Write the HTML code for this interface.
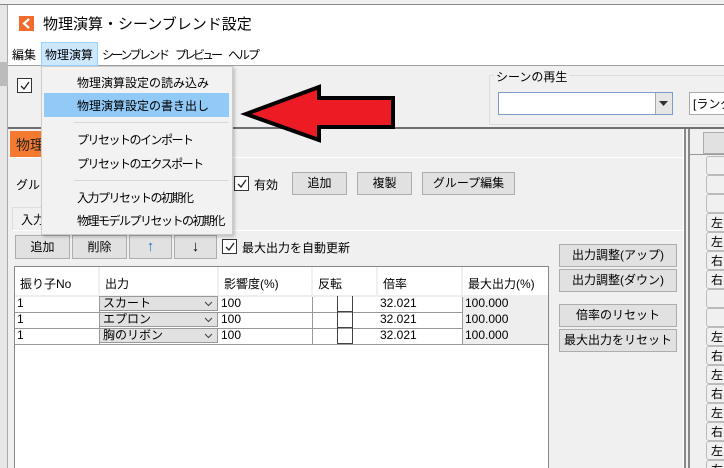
<!DOCTYPE html>
<html><head><meta charset="utf-8"><style>
*{box-sizing:border-box;margin:0;padding:0}
html,body{width:724px;height:468px;overflow:hidden}
body{background:#f0f0f0;font-family:"Liberation Sans","Noto Sans CJK JP",sans-serif;font-size:12px;color:#000;position:relative}
.a{position:absolute;white-space:nowrap}
.btn{position:absolute;background:#e1e1e1;border:1px solid #adadad;text-align:center;font-size:12px}
.cb{position:absolute;width:15px;height:15px;background:#fff;border:1px solid #333}
.cb svg{position:absolute;left:1px;top:1px}
.cell{position:absolute;height:16px;line-height:15px;font-size:12px;padding-left:2px}
.k{letter-spacing:-1.5px}
</style></head><body>
<div class="a" style="left:0;top:0;width:724px;height:5px;background:#f0f0f0;border-bottom:1px solid #888"></div>
<div class="a" style="left:0;top:5px;width:8px;height:463px;background:#e6e6e6;border-right:1px solid #aaa"></div>
<div class="a" style="left:0;top:62px;width:8px;height:24px;background:#bbb"></div>
<!-- title bar -->
<div class="a" style="left:8px;top:5px;width:716px;height:61px;background:#fff;border-bottom:1px solid #a0a0a0"></div>
<div class="a" style="left:19px;top:16px;width:15px;height:15px;background:#f26b2c"></div>
<svg class="a" style="left:19px;top:16px" width="15" height="15"><path d="M10 3 L5 7.5 L10 12" stroke="#fff" stroke-width="2.2" fill="none"/></svg>
<div class="a" style="left:43px;top:13px;font-size:15px">物理演算・シーンブレンド設定</div>
<!-- menu -->
<div class="a" style="left:41px;top:42px;width:57px;height:24px;background:#cce8ff;border:1px solid #99d1ff"></div>
<div class="a" style="left:12px;top:46px;font-size:12px">編集</div>
<div class="a" style="left:45px;top:46px;font-size:12px">物理演算</div>
<div class="a k" style="left:102px;top:46px;font-size:12px;letter-spacing:-2.5px">シーンブレンド</div>
<div class="a k" style="left:175px;top:46px;font-size:12px;letter-spacing:-3px">プレビュー</div>
<div class="a k" style="left:228px;top:46px;font-size:12px;letter-spacing:-2px">ヘルプ</div>
<!-- checkbox top -->
<div class="cb" style="left:17px;top:78px"><svg width="12" height="12"><path d="M2 6 L5 9 L10 2" stroke="#222" stroke-width="1.3" fill="none"/></svg></div>
<!-- scene group -->
<div class="a" style="left:489px;top:75px;width:240px;height:50px;border:1px solid #dcdcdc"></div>
<div class="a" style="left:494px;top:68px;background:#f0f0f0;padding:0 2px;font-size:12px">シーンの再生</div>
<div class="a" style="left:498px;top:92px;width:175px;height:23px;background:#fff;border:1px solid #7a9cc6"></div>
<div class="a" style="left:655px;top:93px;width:17px;height:21px;background:#e6e6e6;border-left:1px solid #aaa"></div>
<svg class="a" style="left:659px;top:101px" width="10" height="6"><path d="M0 0 H9 L4.5 5Z" fill="#333"/></svg>
<div class="a" style="left:689px;top:92px;width:40px;height:23px;background:#fff;border:1px solid #aaa;padding:2px 0 0 3px">[ランダ</div>
<!-- main divider -->
<div class="a" style="left:8px;top:127px;width:716px;height:2px;background:#707070"></div>
<!-- left panel -->
<div class="a" style="left:10px;top:131px;width:60px;height:26px;background:#f47a2f;padding:4px 0 0 6px;font-size:14px;color:#222">物理</div>
<div class="a" style="left:10px;top:157px;width:674px;height:1px;background:#fff"></div>
<div class="a" style="left:683px;top:129px;width:3px;height:339px;background:#888;border-left:1px solid #fff"></div>
<div class="a" style="left:688px;top:129px;width:2px;height:339px;background:#888"></div>
<div class="a" style="left:16px;top:176px">グル</div>
<div class="cb" style="left:234px;top:176px"><svg width="12" height="12"><path d="M2 6 L5 9 L10 2" stroke="#222" stroke-width="1.3" fill="none"/></svg></div>
<div class="a" style="left:254px;top:176px">有効</div>
<div class="btn" style="left:292px;top:172px;width:55px;height:23px;line-height:21px">追加</div>
<div class="btn" style="left:357px;top:172px;width:55px;height:23px;line-height:21px">複製</div>
<div class="btn" style="left:422px;top:172px;width:93px;height:23px;line-height:21px">グループ編集</div>
<div class="a" style="left:12px;top:207px;width:40px;height:24px;border:1px solid #ddd;border-bottom:none;padding:3px 0 0 8px">入力</div>
<div class="a" style="left:12px;top:230px;width:672px;height:1px;background:#fff"></div>
<div class="btn" style="left:15px;top:235px;width:55px;height:24px;line-height:22px">追加</div>
<div class="btn" style="left:72px;top:235px;width:55px;height:24px;line-height:22px">削除</div>
<div class="btn" style="left:129px;top:235px;width:43px;height:24px;line-height:22px;color:#2a6fc9;font-size:15px">↑</div>
<div class="btn" style="left:174px;top:235px;width:43px;height:24px;line-height:22px;font-size:15px">↓</div>
<div class="cb" style="left:222px;top:239px"><svg width="12" height="12"><path d="M2 6 L5 9 L10 2" stroke="#222" stroke-width="1.3" fill="none"/></svg></div>
<div class="a" style="left:242px;top:239px">最大出力を自動更新</div>
<!-- table -->
<div class="a" style="left:14px;top:266px;width:535px;height:202px;background:#fff;border:1px solid #888;border-bottom:none"></div>
<div class="a" style="left:15px;top:295px;width:533px;height:2px;background:#eee"></div>
<div class="a" style="left:20px;top:275px">振り子No</div>
<div class="a" style="left:105px;top:275px">出力</div>
<div class="a" style="left:224px;top:275px">影響度(%)</div>
<div class="a" style="left:318px;top:275px">反転</div>
<div class="a" style="left:383px;top:275px">倍率</div>
<div class="a" style="left:468px;top:275px">最大出力(%)</div>
<div class="a" style="left:98px;top:267px;width:2px;height:28px;background:#f0f0f0"></div>
<div class="a" style="left:217px;top:267px;width:2px;height:28px;background:#f0f0f0"></div>
<div class="a" style="left:311px;top:267px;width:2px;height:28px;background:#f0f0f0"></div>
<div class="a" style="left:376px;top:267px;width:2px;height:28px;background:#f0f0f0"></div>
<div class="a" style="left:461px;top:267px;width:2px;height:28px;background:#f0f0f0"></div>
<!-- rows -->
<div class="a" style="left:15px;top:297px;width:533px;height:48px">
 <div class="a" style="left:0;top:15px;width:533px;height:1px;background:#999"></div>
 <div class="a" style="left:0;top:31px;width:533px;height:1px;background:#999"></div>
 <div class="a" style="left:0;top:47px;width:533px;height:1px;background:#999"></div>
 <div class="a" style="left:84px;top:0;width:1px;height:48px;background:#999"></div>
 <div class="a" style="left:297px;top:0;width:1px;height:48px;background:#999"></div>
 <div class="a" style="left:447px;top:0;width:86px;height:47px;background:#eee;border-left:1px solid #999"></div>
</div>
<div class="cell" style="left:15px;top:296px">1</div>
<div class="cell" style="left:15px;top:312px">1</div>
<div class="cell" style="left:15px;top:328px">1</div>
<div class="a" style="left:99px;top:296px;width:119px;height:15px;background:#e1e1e1;border:1px solid #999;padding-left:3px;line-height:13px">スカート</div>
<div class="a" style="left:99px;top:312px;width:119px;height:15px;background:#e1e1e1;border:1px solid #999;padding-left:3px;line-height:13px">エプロン</div>
<div class="a" style="left:99px;top:328px;width:119px;height:15px;background:#e1e1e1;border:1px solid #999;padding-left:3px;line-height:13px">胸のリボン</div>
<svg class="a" style="left:204px;top:301px" width="9" height="40"><path d="M1 1 L4.5 4.5 L8 1 M1 17 L4.5 20.5 L8 17 M1 33 L4.5 36.5 L8 33" stroke="#444" fill="none"/></svg>
<div class="cell" style="left:219px;top:296px">100</div>
<div class="cell" style="left:219px;top:312px">100</div>
<div class="cell" style="left:219px;top:328px">100</div>
<div class="a" style="left:337px;top:296px;width:16px;height:16px;border:1px solid #444;border-top:none"></div>
<div class="a" style="left:337px;top:312px;width:16px;height:16px;border:1px solid #444;border-top:none"></div>
<div class="a" style="left:337px;top:328px;width:16px;height:16px;border:1px solid #444;border-top:none"></div>
<div class="cell" style="left:378px;top:296px">32.021</div>
<div class="cell" style="left:378px;top:312px">32.021</div>
<div class="cell" style="left:378px;top:328px">32.021</div>
<div class="cell" style="left:463px;top:296px">100.000</div>
<div class="cell" style="left:463px;top:312px">100.000</div>
<div class="cell" style="left:463px;top:328px">100.000</div>
<!-- right buttons -->
<div class="btn" style="left:559px;top:244px;width:118px;height:23px;line-height:21px">出力調整(アップ)</div>
<div class="btn" style="left:559px;top:269px;width:118px;height:23px;line-height:21px">出力調整(ダウン)</div>
<div class="btn" style="left:559px;top:304px;width:118px;height:23px;line-height:21px">倍率のリセット</div>
<div class="btn" style="left:559px;top:329px;width:118px;height:23px;line-height:21px">最大出力をリセット</div>
<!-- far right panel -->
<div class="btn" style="left:703px;top:132px;width:30px;height:22px"></div>
<div class="a" style="left:690px;top:154px;width:34px;height:1px;background:#999"></div>
<div class="a" style="left:706px;top:156px;width:30px;height:312px;overflow:hidden">
<div style="height:19px;border:1px solid #bbb;border-radius:3px"></div>
<div style="height:19px;border:1px solid #bbb;border-radius:3px"></div>
<div style="height:19px;border:1px solid #bbb;border-radius:3px"></div>
<div style="height:19px;border:1px solid #bbb;border-radius:3px;padding-left:4px">左</div>
<div style="height:19px;border:1px solid #bbb;border-radius:3px;padding-left:4px">左</div>
<div style="height:19px;border:1px solid #bbb;border-radius:3px;padding-left:4px">右</div>
<div style="height:19px;border:1px solid #bbb;border-radius:3px;padding-left:4px">右</div>
<div style="height:19px;border:1px solid #bbb;border-radius:3px"></div>
<div style="height:19px;border:1px solid #bbb;border-radius:3px"></div>
<div style="height:19px;border:1px solid #bbb;border-radius:3px;padding-left:4px">左</div>
<div style="height:19px;border:1px solid #bbb;border-radius:3px;padding-left:4px">右</div>
<div style="height:19px;border:1px solid #bbb;border-radius:3px;padding-left:4px">左</div>
<div style="height:19px;border:1px solid #bbb;border-radius:3px;padding-left:4px">右</div>
<div style="height:19px;border:1px solid #bbb;border-radius:3px;padding-left:4px">左</div>
<div style="height:19px;border:1px solid #bbb;border-radius:3px;padding-left:4px">右</div>
<div style="height:19px;border:1px solid #bbb;border-radius:3px;padding-left:4px">左</div>
<div style="height:19px;border:1px solid #bbb;border-radius:3px;padding-left:4px">右</div>
</div>
<!-- dropdown menu -->
<div class="a" style="left:41px;top:66px;width:192px;height:169px;background:#f2f2f2;border:1px solid #ccc;box-shadow:2px 2px 3px rgba(0,0,0,.2)"></div>
<div class="a" style="left:44px;top:93px;width:185px;height:24px;background:#91c9f7"></div>
<div class="a" style="left:74px;top:122px;width:154px;height:1px;background:#d7d7d7"></div>
<div class="a" style="left:74px;top:180px;width:154px;height:1px;background:#d7d7d7"></div>
<div class="a" style="left:77px;top:74px">物理演算設定の読み込み</div>
<div class="a" style="left:77px;top:97px">物理演算設定の書き出し</div>
<div class="a k" style="left:77px;top:131px">プリセットのインポート</div>
<div class="a k" style="left:77px;top:155px">プリセットのエクスポート</div>
<div class="a k" style="left:77px;top:189px">入力プリセットの初期化</div>
<div class="a k" style="left:77px;top:212px">物理モデルプリセットの初期化</div>
<!-- arrow -->
<svg class="a" style="left:240px;top:84px" width="156" height="60"><path d="M6 30 L79 3 L79 14 L153 14 L153 43 L79 43 L79 56 Z" fill="#ed1c24" stroke="#000" stroke-width="4" stroke-linejoin="miter"/></svg>
</body></html>
